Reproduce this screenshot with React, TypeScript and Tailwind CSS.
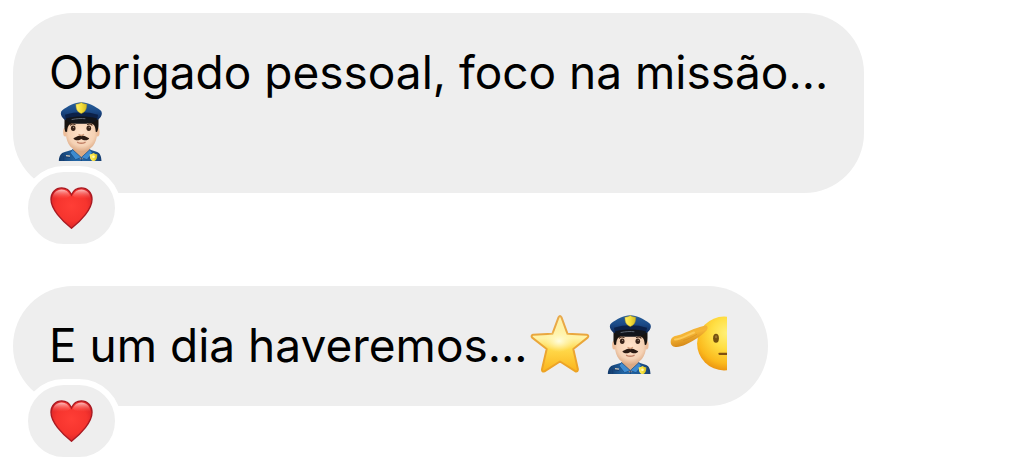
import type { ReactNode } from "react";

function HeartIcon() {
  return (
    <svg viewBox="0 0 44 42" className="h-[42px] w-11" aria-hidden="true">
      <defs>
        <radialGradient id="heart-fill" cx="50%" cy="45%" r="62%">
          <stop offset="0" stopColor="#ff3e36" />
          <stop offset="0.6" stopColor="#f6342e" />
          <stop offset="1" stopColor="#d31f25" />
        </radialGradient>
        <linearGradient id="heart-shine" x1="0" y1="0" x2="0" y2="1">
          <stop offset="0" stopColor="#ffd0cf" stopOpacity="0.9" />
          <stop offset="1" stopColor="#ff5a52" stopOpacity="0" />
        </linearGradient>
      </defs>
      <path
        d="M21.500 7.800C19.500 3.200 16 .9 11.700.9 5.400.9 1 5.800 1 12.300c0 5.200 2.500 10 6.600 15.300 3.900 5 8.900 9.700 13.900 13.700 5-4 10-8.700 13.900-13.700 4.100-5.300 6.600-10.100 6.600-15.300C42 5.800 37.600.9 31.300.9c-4.300 0-7.800 2.300-9.800 6.900Z"
        fill="url(#heart-fill)"
        stroke="#a91a22"
        strokeWidth="1.4"
      />
      <path d="M2.700 12c0-6 4-9.500 9-9.500 4 0 6.800 2 8.500 6C17.500 13 7.700 11 2.700 12Z" fill="url(#heart-shine)" />
      <path d="M40.300 12c0-6-4-9.500-9-9.500-4 0-6.800 2-8.500 6 2.700 4.500 12.500 2.500 17.500 3.500Z" fill="url(#heart-shine)" />
    </svg>
  );
}

function StarIcon() {
  return (
    <svg viewBox="0 0 60 60" className="size-[60px]" role="img" aria-label="Estrela">
      <defs>
        <linearGradient id="star-fill" x1="0" y1="0" x2="0" y2="1">
          <stop offset="0" stopColor="#fff0a8" />
          <stop offset="0.4" stopColor="#fff3a6" />
          <stop offset="0.6" stopColor="#ffd94a" />
          <stop offset="1" stopColor="#fbb41c" />
        </linearGradient>
        <radialGradient id="star-glow">
          <stop offset="0" stopColor="#fffde0" />
          <stop offset="1" stopColor="#fff6b0" stopOpacity="0" />
        </radialGradient>
        <linearGradient id="star-edge" x1="0" y1="0" x2="0" y2="1">
          <stop offset="0" stopColor="#e8a94c" />
          <stop offset="1" stopColor="#eda323" />
        </linearGradient>
      </defs>
      <path
        d="M28.600 2.200Q30 0 31.400 2.200L37.500 18.800 56.800 19.800Q59.400 20.600 57.600 22.600L43.300 34 47.900 54.200Q47.800 57.100 45.200 56.200L30 46.500 14.500 56.400Q11.800 57.200 12 54.200L16.700 34 2.200 22.600Q.600 20.600 3 19.800L22.400 18.800Z"
        fill="url(#star-fill)"
        stroke="url(#star-edge)"
        strokeWidth="2"
        strokeLinejoin="round"
      />
      <ellipse cx="29" cy="26" rx="15" ry="11" fill="url(#star-glow)" />
    </svg>
  );
}

function OfficerIcon() {
  return (
    <svg viewBox="0 0 60 59" className="h-[59px] w-[60px]" role="img" aria-label="Policial">
      <defs>
        <linearGradient id="officer-cap" x1="0" y1="0" x2="0" y2="1">
          <stop offset="0" stopColor="#28609b" />
          <stop offset="0.5" stopColor="#1b4a87" />
          <stop offset="1" stopColor="#102b5b" />
        </linearGradient>
        <linearGradient id="officer-shirt" x1="0" y1="0" x2="1" y2="0">
          <stop offset="0" stopColor="#123969" />
          <stop offset="0.4" stopColor="#2468a8" />
          <stop offset="0.7" stopColor="#205c98" />
          <stop offset="1" stopColor="#153d71" />
        </linearGradient>
        <radialGradient id="officer-skin" cx="50%" cy="40%" r="60%">
          <stop offset="0" stopColor="#ffe3cb" />
          <stop offset="0.7" stopColor="#f5d2b5" />
          <stop offset="1" stopColor="#dcaa86" />
        </radialGradient>
        <linearGradient id="officer-badge" x1="0" y1="0" x2="1" y2="0">
          <stop offset="0" stopColor="#fff16c" />
          <stop offset="0.5" stopColor="#f6df3b" />
          <stop offset="1" stopColor="#d0ba24" />
        </linearGradient>
      </defs>
      <path d="M7.800 60c0-5.500 1.700-9 6-10l8.200-2.500h16.500l7 2.300c3.800 1.200 5 4.700 5 10.200Z" fill="url(#officer-shirt)" />
      <path d="M22 44h16.500v6.500L30.300 58 22 50.500Z" fill="#dba983" />
      <path d="m21.500 47.500-2.300 3.300 5.300 7 5.800-2.300Z" fill="#3e8bd0" stroke="#174a84" strokeWidth=".7" />
      <path d="m39 47.500 2.300 3.300-5.200 7-5.800-2.300Z" fill="#3e8bd0" stroke="#174a84" strokeWidth=".7" />
      <path d="M30.300 56v4" stroke="#15427b" strokeWidth="1" />
      <path d="m14 54.800 5 .7M12.700 54v5" stroke="#173d70" strokeWidth="1" />
      <path d="m15 53.600 4 .6" stroke="#d4c6b2" strokeWidth="1.200" />
      <ellipse cx="14.300" cy="30" rx="2.200" ry="4.500" fill="#edbd99" />
      <ellipse cx="46.400" cy="30" rx="2.200" ry="4.500" fill="#edbd99" />
      <path d="M15 19h31v13c0 9-6.200 17.500-15.700 17.500S15 41 15 32Z" fill="url(#officer-skin)" />
      <path d="M13.500 15h34v8c0 3-.7 5.500-1.500 7l-1.300-.3c-.2-3.500-.7-6.200-3-7.700-7-2-16-2-22.400 0-2.300 1.500-3 4.200-3.200 7.700l-1.600.3c-.8-2-1.200-4.500-1-7Z" fill="#18130f" />
      <path d="M19.500 23c1.200-1.200 3.200-1.200 4.500-.5M36.500 22.500c1.400-.7 3.300-.6 4.500.5" fill="none" stroke="#4b3020" strokeWidth="1.200" strokeLinecap="round" />
      <ellipse cx="22.200" cy="26.300" rx="2.300" ry="2.700" fill="#39241a" />
      <ellipse cx="37.800" cy="26.300" rx="2.300" ry="2.700" fill="#39241a" />
      <circle cx="22.600" cy="25.300" r=".6" fill="#b9a08c" />
      <circle cx="38.200" cy="25.300" r=".6" fill="#b9a08c" />
      <path d="M28 32.500c1.200 1 3.400 1 4.600 0" fill="none" stroke="#d49c78" strokeWidth="1.200" strokeLinecap="round" />
      <path d="M30.300 34.300c-2.800-1.500-5 .8-7.900 2 1 2.700 5.900 2.400 7.900.8 2 1.600 6.900 1.900 7.900-.8-2.900-1.200-5.100-3.500-7.900-2Z" fill="#2c1b13" />
      <path d="M26.500 40.300c2 1 5.600 1 7.600 0" fill="none" stroke="#c18167" strokeWidth="1.300" strokeLinecap="round" />
      <path d="M30.300.3C24 .3 16 4.500 11.300 8.300c-2 1.600-1.700 4.200-.6 6.200.9 1.600 2.200 2.800 3.600 3.500 9.500-4 22.700-4 32 0 1.500-.7 2.800-2 3.700-3.500 1.200-2 1.300-4.700-.6-6.200C44.600 4.500 36.600.3 30.300.3Z" fill="url(#officer-cap)" />
      <path d="M14 12.800c10.500-3.300 22.500-3.300 33 0l-.7 4.500c-9.300-3-22.300-3-31.500 0Z" fill="#0c2148" />
      <path d="M15 16.500c9.500-2.600 21.500-2.600 31 0l-.5 2.200c-3 2-8 3.100-15.200 3.100S18 20.700 15.400 18.700Z" fill="#12151b" />
      <path d="M21 17.500c4.500-1 9.500-1.200 13-.8" fill="none" stroke="#5d6672" strokeWidth="1" strokeLinecap="round" />
      <path d="M30.300.5c-1.400 1.100-3.500 1.700-5.400 1.700.2 4.700.8 7.400 5.400 9.300 4.600-1.900 5.200-4.600 5.400-9.300-1.900 0-4-.6-5.400-1.700Z" fill="url(#officer-badge)" stroke="#b89c22" strokeWidth=".5" />
      <path d="M42.500 51c-1.200.9-2.400 1.200-3.800 1.200 0 3.900.7 6 3.800 7.300 3.100-1.300 3.800-3.400 3.800-7.300-1.400 0-2.600-.3-3.800-1.200Z" fill="url(#officer-badge)" />
      <circle cx="42.500" cy="54.800" r="1.300" fill="#fff8bd" />
    </svg>
  );
}

function SaluteIcon() {
  return (
    <svg viewBox="0 0 60 60" className="size-[60px]" role="img" aria-label="Continência">
      <defs>
        <clipPath id="salute-clip">
          <rect width="57" height="60" />
        </clipPath>
        <radialGradient id="salute-face" gradientUnits="userSpaceOnUse" cx="57" cy="18" r="38">
          <stop offset="0" stopColor="#fff07a" />
          <stop offset="0.4" stopColor="#ffdf44" />
          <stop offset="0.8" stopColor="#fbb91d" />
          <stop offset="1" stopColor="#eb9411" />
        </radialGradient>
        <linearGradient id="salute-hand" x1="0" y1="0" x2="0.4" y2="1">
          <stop offset="0" stopColor="#e8a838" />
          <stop offset="0.5" stopColor="#f6b635" />
          <stop offset="1" stopColor="#d08214" />
        </linearGradient>
      </defs>
      <g clipPath="url(#salute-clip)">
        <circle cx="54" cy="28.500" r="26.900" fill="url(#salute-face)" />
        <path
          d="M.7 27.500c-.2-4 2-6 5.500-6.700 6.300-1.200 12.500-5 17.500-6.800 4.500-1.600 8-2.500 11.500-3.500 2.800-.5 3 3.300 1.300 5-4 4-9 7.700-14 10.400-4.500 2.500-8 4.200-11.700 5.400-4.500 1.500-9.800.900-10.100-3.800Z"
          fill="url(#salute-hand)"
        />
        <path d="M5 24.500c6-.3 12.500-4.800 19-7" fill="none" stroke="#fcca58" strokeWidth="2" strokeLinecap="round" />
        <path d="M13 25.500c5-1.200 9.500-3.700 14-6.300" fill="none" stroke="#cf8820" strokeOpacity=".6" strokeWidth=".8" />
        <ellipse cx="46" cy="23.300" rx="2.900" ry="4.500" fill="#74500f" />
        <ellipse cx="46.100" cy="21.800" rx="1.200" ry="1.500" fill="#9a752c" />
        <path d="M49.500 38.800h12" stroke="#805010" strokeWidth="2.300" strokeLinecap="round" />
      </g>
    </svg>
  );
}

function Emoji({ children }: { children: ReactNode }) {
  return <span className="mr-2 ml-0.5 block h-[60px] shrink-0">{children}</span>;
}

function Message({ text, children }: { text: string; children: ReactNode }) {
  return (
    <li className="flex flex-col items-start">
      <div className="flex max-w-[86%] flex-wrap items-start rounded-[60px] bg-[#eeeeee] pt-[29px] pr-[30px] pb-[31px] pl-9 text-[46px] leading-[60px] text-black">
        <p>{text}</p>
        {children}
      </div>
      <button
        type="button"
        aria-label="Reação: coração"
        className="relative ml-[9px] -mt-[27px] flex h-[84px] w-[99px] items-center justify-center rounded-full border-6 border-white bg-[#eeeeee]"
      >
        <HeartIcon />
      </button>
    </li>
  );
}

export default function App() {
  return (
    <main className="bg-white px-[13px] pt-[13px] font-['Inter',sans-serif]">
      <ul className="flex flex-col gap-9">
        <Message text="Obrigado pessoal, foco na missão...">
          <Emoji>
            <OfficerIcon />
          </Emoji>
        </Message>
        <Message text="E um dia haveremos...">
          <Emoji>
            <StarIcon />
          </Emoji>
          <Emoji>
            <OfficerIcon />
          </Emoji>
          <Emoji>
            <SaluteIcon />
          </Emoji>
        </Message>
      </ul>
    </main>
  );
}
